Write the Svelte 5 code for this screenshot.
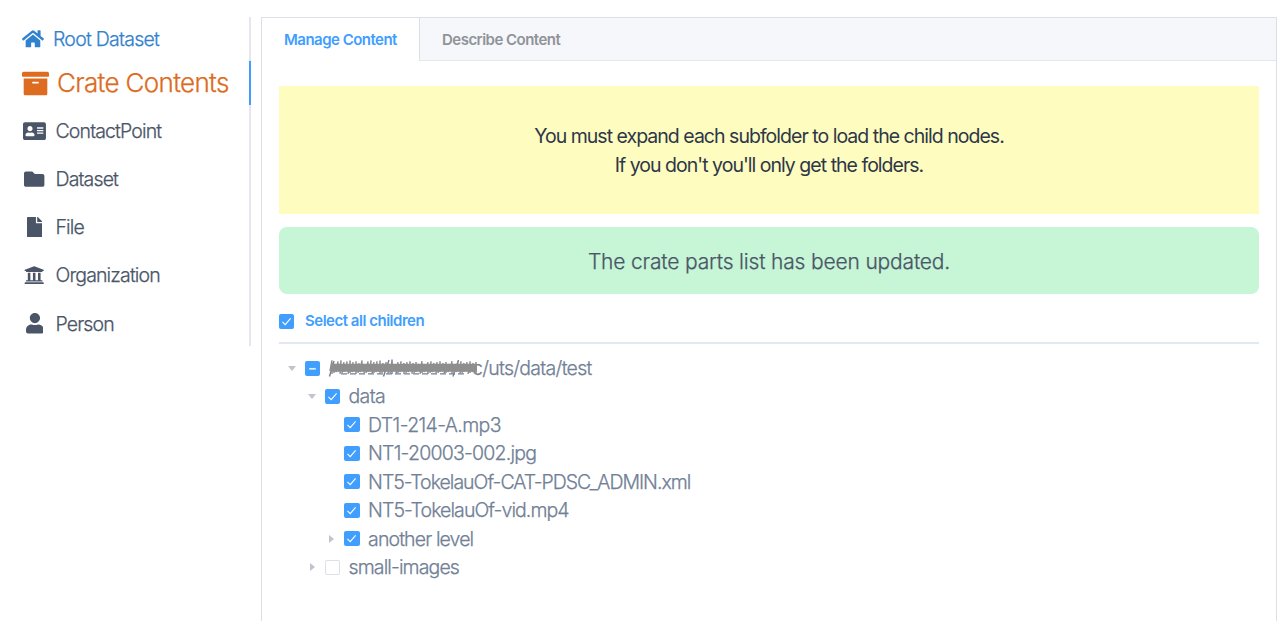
<script>
  const address = 'M528 32H48C21.5 32 0 53.5 0 80v352c0 26.5 21.5 48 48 48h480c26.5 0 48-21.5 48-48V80c0-26.5-21.5-48-48-48zm-352 96c35.3 0 64 28.7 64 64s-28.7 64-64 64-64-28.7-64-64 28.7-64 64-64zm112 236.8c0 10.6-10 19.2-22.4 19.2H86.4C74 384 64 375.4 64 364.8v-19.2c0-31.8 30.1-57.6 67.2-57.6h5c12.3 5.1 25.7 8 39.8 8s27.6-2.9 39.8-8h5c37.1 0 67.2 25.8 67.2 57.6v19.2zM512 312c0 4.4-3.6 8-8 8H360c-4.4 0-8-3.6-8-8v-16c0-4.4 3.6-8 8-8h144c4.4 0 8 3.6 8 8v16zm0-64c0 4.4-3.6 8-8 8H360c-4.4 0-8-3.6-8-8v-16c0-4.4 3.6-8 8-8h144c4.4 0 8 3.6 8 8v16zm0-64c0 4.4-3.6 8-8 8H360c-4.4 0-8-3.6-8-8v-16c0-4.4 3.6-8 8-8h144c4.4 0 8 3.6 8 8v16z';
  const home = 'M280.37 148.26L96 300.11V464a16 16 0 0 0 16 16l112.06-.29a16 16 0 0 0 15.92-16V368a16 16 0 0 1 16-16h64a16 16 0 0 1 16 16v95.64a16 16 0 0 0 16 16.05L464 480a16 16 0 0 0 16-16V300L295.67 148.26a12.19 12.19 0 0 0-15.3 0zM571.6 251.47L488 182.56V44.05a12 12 0 0 0-12-12h-56a12 12 0 0 0-12 12v72.61L318.47 43a48 48 0 0 0-61 0L4.34 251.47a12 12 0 0 0-1.6 16.9l25.5 31A12 12 0 0 0 45.15 301l235.22-193.74a12.19 12.19 0 0 1 15.3 0L530.9 301a12 12 0 0 0 16.9-1.6l25.5-31a12 12 0 0 0-1.7-16.93z';
  const archive = 'M32 448c0 17.7 14.3 32 32 32h384c17.7 0 32-14.3 32-32V160H32v288zm160-212c0-6.6 5.4-12 12-12h104c6.6 0 12 5.4 12 12v8c0 6.6-5.4 12-12 12H204c-6.6 0-12-5.4-12-12v-8zM480 32H32C14.3 32 0 46.3 0 64v48c0 8.8 7.2 16 16 16h480c8.8 0 16-7.2 16-16V64c0-17.7-14.3-32-32-32z';
  const types = [
    { name: 'ContactPoint', w: 576, d: address },
    { name: 'Dataset', w: 512, d: 'M464 128H272l-64-64H48C21.49 64 0 85.49 0 112v288c0 26.51 21.49 48 48 48h416c26.51 0 48-21.49 48-48V176c0-26.51-21.49-48-48-48z' },
    { name: 'File', w: 384, d: 'M224 136V0H24C10.7 0 0 10.7 0 24v464c0 13.3 10.7 24 24 24h336c13.3 0 24-10.7 24-24V160H248c-13.2 0-24-10.8-24-24zm160-14.1v6.1H256V0h6.1c6.4 0 12.5 2.5 17 7l97.9 98c4.5 4.5 7 10.6 7 16.9z' },
    { name: 'Organization', w: 512, d: 'M496 128v16a8 8 0 0 1-8 8h-24v12c0 6.627-5.373 12-12 12H60c-6.627 0-12-5.373-12-12v-12H24a8 8 0 0 1-8-8v-16a8 8 0 0 1 4.941-7.392l232-88a7.996 7.996 0 0 1 6.118 0l232 88A8 8 0 0 1 496 128zm-24 304H40c-13.255 0-24 10.745-24 24v16a8 8 0 0 0 8 8h464a8 8 0 0 0 8-8v-16c0-13.255-10.745-24-24-24zM96 192v192H60c-6.627 0-12 5.373-12 12v20h416v-20c0-6.627-5.373-12-12-12h-36V192h-64v192h-64V192h-64v192h-64V192H96z' },
    { name: 'Person', w: 448, d: 'M224 256c70.7 0 128-57.3 128-128S294.7 0 224 0 96 57.3 96 128s57.3 128 128 128zm89.6 32h-16.7c-22.2 10.2-46.9 16-72.9 16s-50.6-5.8-72.9-16h-16.7C60.2 288 0 348.2 0 422.4V464c0 26.5 21.5 48 48 48h352c26.5 0 48-21.5 48-48v-41.6c0-74.2-60.2-134.4-134.4-134.4z' },
  ];
  const nodes = [
    { label: 'c/uts/data/test', level: 0, caret: 'open', state: 'partial', masked: true, ls: -0.72 },
    { label: 'data', level: 1, caret: 'open', state: 'checked', ls: -0.65 },
    { label: 'DT1-214-A.mp3', level: 2, state: 'checked', ls: -0.62 },
    { label: 'NT1-20003-002.jpg', level: 2, state: 'checked', ls: -0.78 },
    { label: 'NT5-TokelauOf-CAT-PDSC_ADMIN.xml', level: 2, state: 'checked', ls: -1 },
    { label: 'NT5-TokelauOf-vid.mp4', level: 2, state: 'checked', ls: -0.92 },
    { label: 'another level', level: 2, caret: 'closed', state: 'checked', ls: -0.88 },
    { label: 'small-images', level: 1, caret: 'closed', state: 'empty', ls: -0.88 },
  ];
  // Uneven brush strokes that cover the private part of the path.
  const brush = Array.from({ length: 74 }, (_, i) => {
    const x = 1 + i * 2;
    const top = 2.4 + ((i * 7) % 5) * 0.9 + (i > 25 ? 0.8 : 0);
    const bottom = 13.2 + ((i * 11) % 4) * 0.9;
    return `M${x} ${bottom}L${x + 2 - ((i * 5) % 3)} ${top}`;
  }).join('');
</script>

{#snippet icon(w, d, size)}
  <svg width={(w / 512) * size} height={size} viewBox="0 0 {w} 512" fill="currentColor"><path {d} /></svg>
{/snippet}

{#snippet box(state)}
  <span class="box {state}">
    <svg width="15" height="15" viewBox="0 0 15 15" fill="none" stroke="#fff" stroke-width="1.1">
      {#if state === 'checked'}<path d="M3.4 7.9 6.2 10.6 11.6 4.4" />{/if}
      {#if state === 'partial'}<path d="M4.2 7.8H10.8" stroke-width="1.7" opacity=".8" />{/if}
    </svg>
  </span>
{/snippet}

<div class="page">
  <nav>
    <div class="item root">{@render icon(576, home, 19.5)}<span>Root Dataset</span></div>
    <div class="item active">{@render icon(512, archive, 27)}<span>Crate Contents</span></div>
    <div class="types">
      {#each types as t}
        <div class="item type"><i>{@render icon(t.w, t.d, 20.4)}</i><span>{t.name}</span></div>
      {/each}
    </div>
  </nav>
  <main>
    <div class="tabs">
      <div class="tab on"><span>Manage Content</span></div>
      <div class="tab"><span>Describe Content</span></div>
    </div>
    <section>
      <div class="warning">
        <div>You must expand each subfolder to load the child nodes.</div>
        <div>If you don't you'll only get the folders.</div>
      </div>
      <div class="success"><span>The crate parts list has been updated.</span></div>
      <label class="all">{@render box('checked')}<span>Select all children</span></label>
      <div class="tree">
        {#each nodes as n}
          <div class="node l{n.level}">
            <span class="caret {n.caret ?? ''}"></span>
            {@render box(n.state)}
            {#if n.masked}
              <svg class="mask" width="143" height="20" viewBox="0 0 143 20" fill="none" stroke="#8e8e8e">
                <path d="M.5 18.5 5 3M54.5 18.5 60 2M124 18.5 129.5 2M63 1.5V16" stroke="#718096" stroke-width="1.4" />
                <path d="M12 15.9H138" stroke="#718096" stroke-width="1.2" stroke-dasharray="6 3" />
                <path stroke-width="1.5" d={brush} />
                <path stroke-width="8" d="M2 9.7H148" />
              </svg>
            {/if}
            <span class="label" style="letter-spacing:{n.ls}px">{n.label}</span>
          </div>
        {/each}
      </div>
    </section>
  </main>
</div>

<style>
  :global(body) { margin: 0; background: #fff; overflow: hidden; }
  .page { display: flex; height: 621px; box-sizing: border-box; padding: 17px 2px 0 22px; font-family: Inter, "Liberation Sans", sans-serif; color: #4a5568; }
  svg { display: block; flex: none; }
  nav { width: 227px; height: 329px; border-right: 2px solid #e4e7ed; flex: none; font-size: 19.5px; font-weight: 300; white-space: nowrap; }
  nav span, .success span, .label { -webkit-text-stroke: .25px currentColor; }
  .item { display: flex; align-items: center; height: 48.2px; }
  .root { height: 44px; gap: 9px; color: #3182ce; letter-spacing: -.74px; }
  .active { height: 44px; gap: 8px; margin-right: -2px; border-right: 2px solid #409eff; color: #dd6b20; font-size: 26px; letter-spacing: -.66px; }
  .active span { margin-top: -2px; }
  .types { padding-top: 1.8px; }
  .type { letter-spacing: -.86px; }
  .type i { width: 25px; margin-right: 8.5px; display: flex; justify-content: center; }
  main { margin-left: 10px; flex: 1; height: 604px; box-sizing: border-box; border: 1px solid #dcdfe6; border-bottom: 0; }
  .tabs { display: flex; height: 43px; background: #f5f7fa; box-shadow: inset 0 -1px #e4e7ed; font-size: 15px; font-weight: 600; color: #909399; letter-spacing: -.52px; white-space: nowrap; }
  .tab { padding: 0 22px; display: flex; align-items: center; }
  .tab.on { width: 113px; background: #fff; color: #409eff; border-right: 1px solid #dcdfe6; }
  section { padding: 25px 17px 0; }
  .warning { height: 128px; box-sizing: border-box; padding-top: 36px; background: #fefcbf; color: #2d3748; text-align: center; font-size: 19.5px; line-height: 29px; letter-spacing: -.98px; }
  .success { margin-top: 13px; height: 67px; padding-top: 2px; box-sizing: border-box; border-radius: 8px; background: #c6f6d5; font-size: 21px; font-weight: 300; letter-spacing: -.17px; display: flex; align-items: center; justify-content: center; }
  .all { display: flex; align-items: center; height: 48px; padding-top: 6px; box-sizing: border-box; gap: 11px; color: #409eff; font-size: 15px; font-weight: 600; letter-spacing: -.48px; }
  .all > span:last-child { margin-top: -2px; }
  .tree { border-top: 2px solid #e2e8f0; padding-top: 9.8px; font-size: 19.5px; font-weight: 300; color: #718096; }
  .node { display: flex; align-items: center; height: 28.45px; white-space: nowrap; }
  .l0 { padding-left: 8px; }
  .l1 { padding-left: 27.5px; }
  .l2 { padding-left: 47.2px; }
  .caret { width: 18px; display: flex; }
  .caret::before { content: ""; border: 4.5px solid transparent; }
  .open::before { border-top: 5px solid #c0c4cc; border-bottom: 0; margin-left: 1px; }
  .closed::before { border-left: 5px solid #c0c4cc; border-right: 0; margin-left: 3px; }
  .box { width: 15px; height: 15px; flex: none; border-radius: 2px; background: #409eff; }
  .l2 .box { width: 15.6px; }
  .box.empty { background: #fff; box-shadow: inset 0 0 0 1px #dcdfe6; }
  .label { margin-left: 9px; }
  .l2 .label { margin-left: 8.3px; }
  .mask { position: relative; margin-left: 9px; overflow: visible; }
  .mask + .label { margin-left: 0; }
</style>
